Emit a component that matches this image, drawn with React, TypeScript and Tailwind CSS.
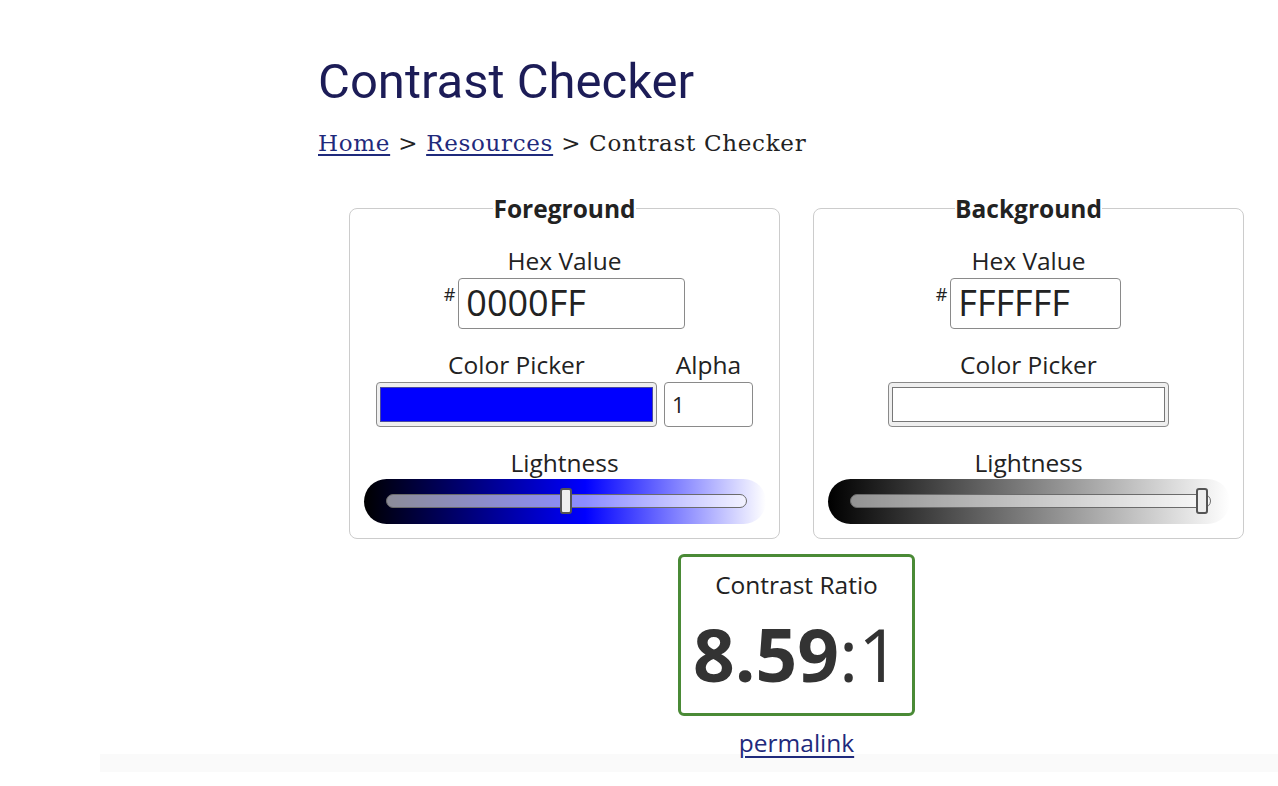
import React from "react";

type SliderProps = {
  gradient: string;
  thumb: string;
};

const LightnessSlider = ({ gradient, thumb }: SliderProps) => {
  return (
    <div className={`mx-auto mt-[1px] flex h-[45px] w-[402px] items-center rounded-full pl-[22px] pr-[19px] ${gradient}`}>
      <div className="relative h-[14px] w-full rounded-full border border-[#6b6b6b] bg-white/55">
        <div className={`absolute top-1/2 h-[26px] w-[12px] -translate-y-1/2 rounded-[3px] border-2 border-[#555] bg-[#eeeeee] ${thumb}`} />
      </div>
    </div>
  );
};

const Label = ({ children }: { children: React.ReactNode }) => (
  <div className="text-center text-[24.5px] leading-[30px] text-[#222]">{children}</div>
);

const App = () => {
  return (
    <div className="min-h-screen bg-white font-['Open_Sans','Noto_Sans',sans-serif] text-[#222]">
      <main className="pl-[318px] pr-[3px] pt-[53px]">
        <h1 className="font-['Roboto',sans-serif] text-[49px] leading-[1.2] text-[#1c1c57]">
          Contrast Checker
        </h1>

        {/* Breadcrumb */}
        <nav className="mt-[16px] font-['DejaVu_Serif',serif] text-[23px] leading-[30px] tracking-[0.7px] text-[#222]">
          <a href="#" className="text-[#1f2a7c] underline underline-offset-[3px]">Home</a>
          {" > "}
          <a href="#" className="text-[#1f2a7c] underline underline-offset-[3px]">Resources</a>
          {" > Contrast Checker"}
        </nav>

        {/* Colour panels */}
        <div className="mx-[31px] mt-[36px] grid grid-cols-2 gap-[33px]">
          {/* Foreground */}
          <fieldset className="rounded-lg border border-[#cccccc] px-0 pb-[14px] pt-0">
            <legend className="mx-auto px-0 text-[24.5px] font-bold leading-[30px] text-[#222]">
              Foreground
            </legend>
            <div className="mt-[22px]">
              <Label>Hex Value</Label>
              <div className="mt-[2px] flex justify-center">
                <span className="mr-[3px] mt-[7px] text-[18px] leading-none">#</span>
                <div className="flex h-[51px] w-[227px] items-center rounded-[4px] border border-[#8a8a8a] pl-[7px] text-[36px] text-[#222]">
                  0000FF
                </div>
              </div>

              <div className="mt-[21px] flex justify-center gap-[7px]">
                <div>
                  <Label>Color Picker</Label>
                  <div className="mt-[2px] h-[45px] w-[281px] rounded-[4px] border border-[#8a8a8a] bg-[#efefef] px-[3px] py-[4px]">
                    <div className="h-full w-full border border-[#4a4aa0] bg-[#0000ff]" />
                  </div>
                </div>
                <div>
                  <Label>Alpha</Label>
                  <div className="mt-[2px] flex h-[45px] w-[89px] items-center rounded-[4px] border border-[#8a8a8a] pl-[7px] text-[22px]">
                    1
                  </div>
                </div>
              </div>

              <div className="mt-[21px]">
                <Label>Lightness</Label>
                <LightnessSlider
                  gradient="bg-[linear-gradient(to_right,#000_0%,#00f_55%,#fff_100%)]"
                  thumb="left-[calc(50%-6px)]"
                />
              </div>
            </div>
          </fieldset>

          {/* Background */}
          <fieldset className="rounded-lg border border-[#cccccc] px-0 pb-[14px] pt-0">
            <legend className="mx-auto px-0 text-[24.5px] font-bold leading-[30px] text-[#222]">
              Background
            </legend>
            <div className="mt-[22px]">
              <Label>Hex Value</Label>
              <div className="mt-[2px] flex justify-center">
                <span className="mr-[3px] mt-[7px] text-[18px] leading-none">#</span>
                <div className="flex h-[51px] w-[171px] items-center rounded-[4px] border border-[#8a8a8a] pl-[7px] text-[36px] text-[#222]">
                  FFFFFF
                </div>
              </div>

              <div className="mt-[21px] flex justify-center">
                <div>
                  <Label>Color Picker</Label>
                  <div className="mt-[2px] h-[45px] w-[281px] rounded-[4px] border border-[#8a8a8a] bg-[#efefef] px-[3px] py-[4px]">
                    <div className="h-full w-full border border-[#777] bg-white" />
                  </div>
                </div>
              </div>

              <div className="mt-[21px]">
                <Label>Lightness</Label>
                <LightnessSlider
                  gradient="bg-[linear-gradient(to_right,#000_0%,#fff_100%)]"
                  thumb="left-[calc(100%-14px)]"
                />
              </div>
            </div>
          </fieldset>
        </div>

        {/* Result */}
        <div className="mt-[15px] flex flex-col items-center">
          <div className="flex h-[162px] w-[237px] flex-col items-center rounded-[6px] border-[3px] border-[#4a8a36] pt-[13px]">
            <div className="text-[24.5px] leading-[30px] text-[#222]">Contrast Ratio</div>
            <div className="mt-[17px] text-[73px] leading-none text-[#333]">
              <span className="font-bold">8.59</span>:1
            </div>
          </div>
          <a href="#" className="mt-[16px] text-[24.5px] leading-[22px] text-[#1f2a7c] underline underline-offset-[4px]">
            permalink
          </a>
        </div>
      </main>
      <div className="ml-[100px] h-[18px] bg-[#fafafa]" />
    </div>
  );
};

export default App;
